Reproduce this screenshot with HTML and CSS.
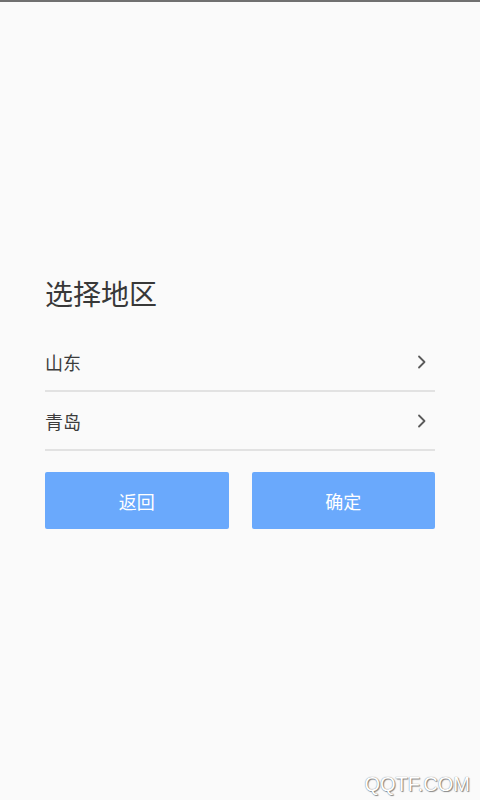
FILE: index.html
```html
<!DOCTYPE html>
<html lang="zh-CN">
<head>
<meta charset="utf-8">
<title>选择地区</title>
<link rel="stylesheet" href="styles.css">
</head>
<body>
<div class="topbar"></div>
<main class="panel">
  <h1 class="title">选择地区</h1>
  <ul class="list">
    <li class="row"><span>山东</span>
      <svg class="chev" width="10" height="14" viewBox="0 0 10 14"><path d="M2 1.5 L7.5 7 L2 12.5" fill="none" stroke="#5a5a5a" stroke-width="1.8" stroke-linecap="round" stroke-linejoin="round"/></svg>
    </li>
    <li class="row"><span>青岛</span>
      <svg class="chev" width="10" height="14" viewBox="0 0 10 14"><path d="M2 1.5 L7.5 7 L2 12.5" fill="none" stroke="#5a5a5a" stroke-width="1.8" stroke-linecap="round" stroke-linejoin="round"/></svg>
    </li>
  </ul>
  <div class="actions">
    <button class="btn">返回</button>
    <button class="btn">确定</button>
  </div>
</main>
<div class="watermark">QQTF.COM</div>
</body>
</html>
```
FILE: styles.css
```css
html, body {
  margin: 0;
  padding: 0;
}
body {
  background: #fafafa;
  font-family: "Noto Sans CJK SC", "Noto Sans", sans-serif;
  color: #333;
  height: 800px;
  position: relative;
  overflow: hidden;
}
.topbar {
  height: 2px;
  background: #707070;
}
.panel {
  padding: 273px 45px 0 45px;
}
.title {
  margin: 0 0 22px 0;
  font-size: 28px;
  line-height: 36px;
  font-weight: 400;
  color: #383838;
}
.list {
  list-style: none;
  margin: 0;
  padding: 0;
}
.row {
  height: 57px;
  border-bottom: 2px solid #e2e2e2;
  display: flex;
  align-items: center;
  justify-content: space-between;
  font-size: 18px;
  color: #3c3c3c;
}
.chev {
  margin-right: 8px;
  display: block;
}
.actions {
  margin-top: 21px;
  display: flex;
  gap: 23px;
}
.btn {
  flex: 1;
  height: 57px;
  border: none;
  border-radius: 2px;
  background: #6aa9fc;
  color: #fff;
  font-family: "Noto Sans CJK SC", "Noto Sans", sans-serif;
  font-size: 18px;
  padding: 0;
}
.watermark {
  position: absolute;
  right: 10px;
  bottom: 4px;
  font-family: "Liberation Sans", Arial, sans-serif;
  font-size: 20px;
  color: #fff;
  letter-spacing: 0;
  text-shadow: 0 0 1px #666, 1px 1px 1px #888;
}
```
